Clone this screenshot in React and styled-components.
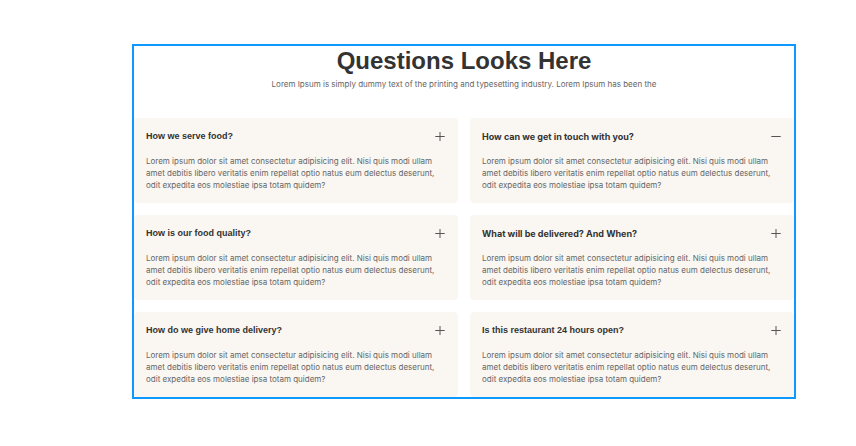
import React from "react";
import styled, { createGlobalStyle } from "styled-components";

const GlobalStyle = createGlobalStyle`
  *, *::before, *::after { box-sizing: border-box; }
  body { margin: 0; background: #fff; color: #333; font-family: Inter, "Liberation Sans", Arial, sans-serif; }
  h1, h2, p { margin: 0; }
`;

const Page = styled.main`
  padding: 44px 60px 47px 132px;
`;

const Section = styled.section`
  border: 2px solid #0d99ff;
`;

const Header = styled.header`
  text-align: center;
  padding-bottom: 28px;
`;

const Title = styled.h1`
  font: 700 24px/30px "Liberation Sans", Arial, sans-serif;
`;

const Subtitle = styled.p`
  margin-top: 2px;
  font-size: 8px;
  line-height: 12px;
  color: #666;
`;

const Grid = styled.div`
  display: grid;
  grid-template-columns: 1fr 1fr;
  gap: 12px;
`;

const Card = styled.article`
  padding: 12px;
  border-radius: 4px;
  background: #faf7f2;
`;

const Question = styled.h2`
  font: ${({ $inter }) =>
    $inter ? '700 9px/13px Inter, sans-serif' : '700 9px/13px "Liberation Sans", Arial, sans-serif'};
`;

const Toggle = styled.button`
  display: flex;
  align-items: center;
  justify-content: space-between;
  width: 100%;
  padding: 0;
  border: 0;
  background: none;
  color: inherit;
  font: inherit;
  text-align: left;
  cursor: pointer;
`;

const Icon = styled.svg`
  width: 12px;
  height: 13px;
  fill: none;
  stroke: #555;
  stroke-width: 1;
`;

const Answer = styled.p`
  margin-top: 12px;
  font-size: 8px;
  line-height: 12px;
  color: #666;
`;

const answer =
  "Lorem ipsum dolor sit amet consectetur adipisicing elit. Nisi quis modi ullam amet debitis libero veritatis enim repellat optio natus eum delectus deserunt, odit expedita eos molestiae ipsa totam quidem?";

const faqs = [
  { question: "How we serve food?" },
  { question: "How can we get in touch with you?", open: true, inter: true },
  { question: "How is our food quality?" },
  { question: "What will be delivered? And When?", inter: true },
  { question: "How do we give home delivery?" },
  { question: "Is this restaurant 24 hours open?" },
];

export default function App() {
  return (
    <Page>
      <GlobalStyle />
      <Section>
        <Header>
          <Title>Questions Looks Here</Title>
          <Subtitle>
            Lorem Ipsum is simply dummy text of the printing and typesetting industry. Lorem Ipsum has been the
          </Subtitle>
        </Header>
        <Grid>
          {faqs.map(({ question, open, inter }) => (
            <Card key={question}>
              <Question $inter={inter}>
                <Toggle type="button">
                  {question}
                  <Icon viewBox="0 0 12 13" aria-hidden="true">
                    <path d="M1.3 6.5H10.7" />
                    {!open && <path d="M6 2V11" strokeWidth="1" />}
                  </Icon>
                </Toggle>
              </Question>
              <Answer>{answer}</Answer>
            </Card>
          ))}
        </Grid>
      </Section>
    </Page>
  );
}
